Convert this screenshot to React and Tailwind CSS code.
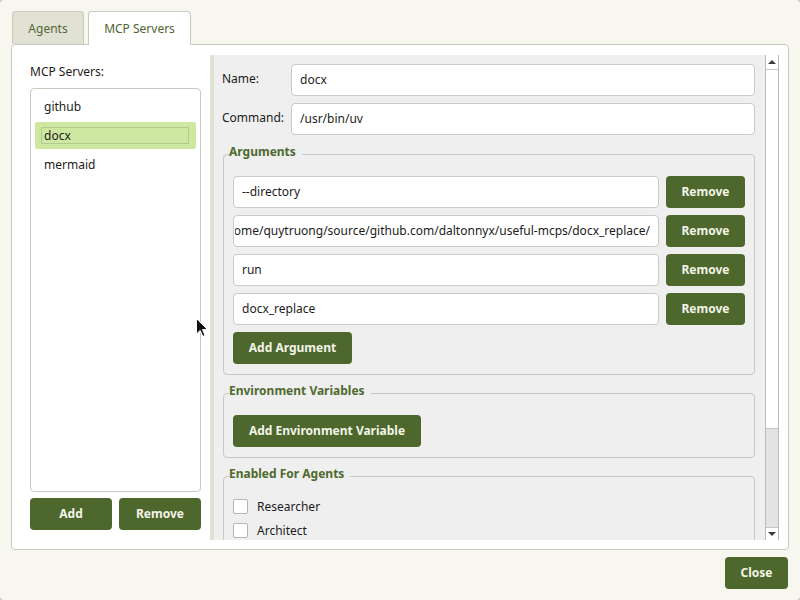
import React from "react";

const font = { fontFamily: '"Noto Sans", "Open Sans", sans-serif' };

function GreenButton({ children, className = "" }) {
  return (
    <button
      className={
        "h-[32px] rounded-[4px] bg-[#4d672c] text-[#f3f4e8] text-[12px] font-bold flex items-center justify-center shrink-0 " +
        className
      }
    >
      {children}
    </button>
  );
}

function TextField({ value, className = "" }) {
  return (
    <div
      className={
        "h-[32px] bg-white border border-[#cbcbc1] rounded-[4px] px-[8px] flex items-center text-[12px] text-[#1c1c1c] overflow-hidden whitespace-nowrap " +
        className
      }
    >
      {value}
    </div>
  );
}

function Group({ title, className = "", children }) {
  return (
    <fieldset
      className={
        "border border-[#c9c9bf] rounded-[4px] px-[9px] pb-[10px] min-w-0 " +
        className
      }
    >
      <legend className="ml-[-4px] pr-[6px] pt-[1px] pb-[5px] leading-[18px] text-[12px] font-bold text-[#4e6a2e]">
        {title}
      </legend>
      {children}
    </fieldset>
  );
}

function ArgRow({ value, rtl }) {
  return (
    <div className="flex gap-[7px]">
      {rtl ? (
        <div className="flex-1 min-w-0 h-[32px] bg-white border border-[#cbcbc1] rounded-[4px] pl-[1px] pr-[8px] flex items-center text-[12px] text-[#1c1c1c] overflow-hidden whitespace-nowrap">
          <div className="w-full flex justify-end overflow-hidden">
            <span className="shrink-0">{value}</span>
          </div>
        </div>
      ) : (
        <div className="flex-1 min-w-0 h-[32px] bg-white border border-[#cbcbc1] rounded-[4px] px-[8px] flex items-center text-[12px] text-[#1c1c1c] overflow-hidden whitespace-nowrap">
          {value}
        </div>
      )}
      <GreenButton className="w-[79px]">Remove</GreenButton>
    </div>
  );
}

function Check({ label }) {
  return (
    <div className="flex items-center gap-[9px] h-[15px]">
      <div className="w-[15px] h-[15px] bg-white border border-[#b5b5ab] rounded-[2px] shrink-0" />
      <span className="text-[12px] text-[#1c1c1c] leading-[15px]">{label}</span>
    </div>
  );
}

export default function App() {
  return (
    <div className="w-[800px] h-[600px] bg-[#ecb3c2]" style={font}>
      <div className="relative w-[800px] h-[600px] bg-[#f7f7f0] rounded-[4px] flex flex-col">
        {/* Tabs */}
        <div className="flex pl-[12px] pt-[11px] gap-[4px] items-start">
          <div className="w-[72px] h-[33px] bg-[#e1e1d4] border border-b-0 border-[#c9c9bd] rounded-t-[4px] flex items-center justify-center pt-[1px] text-[12px] text-[#55673a]">
            Agents
          </div>
          <div className="relative z-10 w-[103px] h-[34px] bg-white border border-b-0 border-[#c9c9bd] rounded-t-[4px] flex items-center justify-center text-[12px] text-[#4e6330]">
            MCP Servers
          </div>
        </div>

        {/* Pane */}
        <div className="ml-[11px] mt-[-1px] w-[778px] h-[506px] bg-white border border-[#c9c9bd] rounded-[4px] flex">
          {/* Left column */}
          <div className="ml-[18px] w-[171px] pt-[18px] flex flex-col">
            <div className="text-[12px] leading-[18px] text-[#1c1c1c]">MCP Servers:</div>
            <div className="mt-[7px] h-[404px] border border-[#c9c9bf] rounded-[4px] bg-white px-[4px] pt-[3px]">
              <div className="h-[29px] flex items-center pl-[9px] text-[12px] text-[#1c1c1c]">github</div>
              <div className="h-[29px] py-[1px]">
                <div className="h-[27px] bg-[#cee8a2] rounded-[2px] px-[6px] py-[5px]">
                  <div className="h-[17px] border border-[#b0cc8c] flex items-center pl-[2px] text-[12px] text-[#1c1c1c] mr-[1px]">
                    docx
                  </div>
                </div>
              </div>
              <div className="h-[29px] flex items-center pl-[9px] text-[12px] text-[#1c1c1c]">mermaid</div>
            </div>
            <div className="mt-[6px] flex gap-[7px]">
              <GreenButton className="w-[82px]">Add</GreenButton>
              <GreenButton className="w-[82px]">Remove</GreenButton>
            </div>
          </div>

          {/* Right scroll area */}
          <div className="ml-[9px] mt-[10px] w-[569px] h-[485px] flex">
            <div className="w-[4px] bg-[#e0e2d2]" />
            <div className="flex-1 min-w-0 bg-[#efefef] overflow-hidden pl-[8px] pr-[10px] pt-[9px] flex flex-col">
              <div className="flex items-center">
                <div className="w-[69px] text-[12px] text-[#1c1c1c] pb-[2px]">Name:</div>
                <TextField value="docx" className="flex-1" />
              </div>
              <div className="flex items-center mt-[7px]">
                <div className="w-[69px] text-[12px] text-[#1c1c1c] pb-[2px]">Command:</div>
                <TextField value="/usr/bin/uv" className="flex-1" />
              </div>

              <Group title="Arguments" className="mt-[7px] ml-[1px] shrink-0 pt-[10px]">
                <div className="flex flex-col gap-[7px]">
                  <ArgRow value="--directory" />
                  <ArgRow value="/home/quytruong/source/github.com/daltonnyx/useful-mcps/docx_replace/" rtl />
                  <ArgRow value="run" />
                  <ArgRow value="docx_replace" />
                  <GreenButton className="w-[119px]">Add Argument</GreenButton>
                </div>
              </Group>

              <Group title="Environment Variables" className="mt-[6px] ml-[1px] shrink-0 pt-[10px]">
                <GreenButton className="w-[188px]">Add Environment Variable</GreenButton>
              </Group>

              <Group title="Enabled For Agents" className="mt-[6px] ml-[1px] shrink-0 pt-[11px]">
                <div className="flex flex-col gap-[9px]">
                  <Check label="Researcher" />
                  <Check label="Architect" />
                  <Check label="Coder" />
                </div>
              </Group>
            </div>

            {/* Scrollbar */}
            <div className="w-[14px] flex flex-col border-x border-[#bdbdb8] bg-white">
              <div className="h-[15px] border-b border-[#c4c4c0] flex items-center justify-center">
                <div className="w-0 h-0 border-x-[4px] border-x-transparent border-b-[4px] border-b-[#3c3c3c]" />
              </div>
              <div className="h-[359px] bg-white border-b border-[#c4c4c0]" />
              <div className="flex-1 bg-[#e3e3e3]" />
              <div className="h-[13px] border-t border-[#c4c4c0] bg-white flex items-center justify-center">
                <div className="w-0 h-0 border-x-[4px] border-x-transparent border-t-[4px] border-t-[#3c3c3c]" />
              </div>
            </div>
          </div>
        </div>

        {/* Bottom */}
        <div className="flex justify-end pr-[12px] mt-[7px]">
          <GreenButton className="w-[63px]">Close</GreenButton>
        </div>

        {/* Mouse cursor */}
        <svg className="absolute left-[196px] top-[318px]" width="12" height="20" viewBox="0 0 12 20">
          <path d="M0.5 0.5 L0.5 16 L4.2 12.4 L6.8 18.5 L9 17.5 L6.5 11.6 L11.5 11.6 Z" fill="#111" stroke="#fff" strokeWidth="1" />
        </svg>
      </div>
    </div>
  );
}
